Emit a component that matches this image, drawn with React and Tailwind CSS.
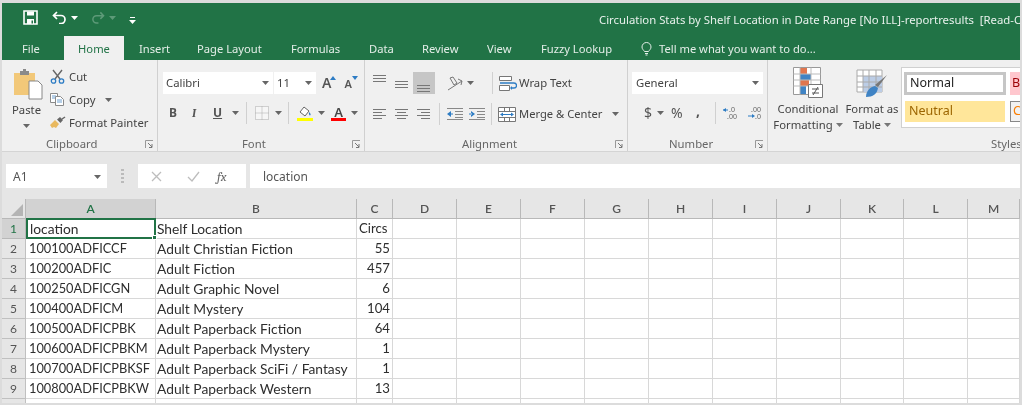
import React from 'react';

const UI_FONT = "font-['Noto_Sans','Open_Sans',sans-serif]";
const CELL_FONT = "font-['Lato','Open_Sans',sans-serif]";

const TABS = [
  { label: 'Insert', cls: 'w-[58px]' },
  { label: 'Page Layout', cls: 'w-[94px]' },
  { label: 'Formulas', cls: 'w-[78px]' },
  { label: 'Data', cls: 'w-[53px]' },
  { label: 'Review', cls: 'w-[65px]' },
  { label: 'View', cls: 'w-[54px]' },
  { label: 'Fuzzy Lookup', cls: 'w-[100px]' },
];

const COLUMNS = ['A', 'B', 'C', 'D', 'E', 'F', 'G', 'H', 'I', 'J', 'K', 'L', 'M'];

const ROWS = [
  ['location', 'Shelf Location', 'Circs'],
  ['100100ADFICCF', 'Adult Christian Fiction', '55'],
  ['100200ADFIC', 'Adult Fiction', '457'],
  ['100250ADFICGN', 'Adult Graphic Novel', '6'],
  ['100400ADFICM', 'Adult Mystery', '104'],
  ['100500ADFICPBK', 'Adult Paperback Fiction', '64'],
  ['100600ADFICPBKM', 'Adult Paperback Mystery', '1'],
  ['100700ADFICPBKSF', 'Adult Paperback SciFi / Fantasy', '1'],
  ['100800ADFICPBKW', 'Adult Paperback Western', '13'],
  ['', '', ''],
];

const Caret = ({ className = '', color = '#666' }) => (
  <svg width="7" height="4" viewBox="0 0 7 4" className={`shrink-0 ${className}`}>
    <path d="M0 0h7L3.5 4z" fill={color} />
  </svg>
);

const Launcher = ({ className = '' }) => (
  <svg width="9" height="9" viewBox="0 0 9 9" className={className}>
    <path d="M.5 8V.5H8" fill="none" stroke="#999" />
    <path d="M3 3l4 4M7 4v3.5H4" fill="none" stroke="#777" />
  </svg>
);

// text align icon, lines given as [x1, x2, y]
const Lines = ({ lines, color = '#777', w = 14, h = 12, className = '' }) => (
  <svg width={w} height={h} viewBox={`0 0 ${w} ${h}`} className={`shrink-0 ${className}`}>
    {lines.map(([a, b, y], i) => (
      <path key={i} d={`M${a} ${y + 0.5}H${b}`} stroke={color} />
    ))}
  </svg>
);

const Group = ({ width, label, labelCls, launcher, children }) => (
  <div className={`${width} h-full shrink-0 flex flex-col border-r border-[#d0d0d0] overflow-hidden`}>
    <div className="h-[76px] shrink-0">{children}</div>
    <div className="flex items-center h-[15px] relative">
      <span className={`text-[11.3px] text-[#666] leading-none whitespace-nowrap ${labelCls}`}>{label}</span>
      {launcher && <Launcher className="absolute right-[3px] top-[4px]" />}
    </div>
  </div>
);

const Sep = ({ cls }) => <div className={`w-px h-[22px] bg-[#d0d0d0] shrink-0 ${cls}`} />;

function TitleBar() {
  return (
    <div className="bg-[#217346] h-[57px] shrink-0 flex flex-col text-white overflow-hidden">
      <div className="h-[33px] flex items-center shrink-0">
        <svg width="15" height="15" viewBox="0 0 15 15" className="ml-[21px] shrink-0 -mt-[5px]">
          <path d="M1 1h13v13H1z" fill="none" stroke="#fff" strokeWidth="1.6" />
          <path d="M4 1.5h7v4H4zM4 9h7v5H4z" fill="#fff" />
          <path d="M8.5 10.5h1.5v3H8.5z" fill="#217346" />
        </svg>
        <svg width="15" height="13" viewBox="0 0 15 13" className="ml-[14px] shrink-0 -mt-[5px]">
          <path d="M5 1L1.5 4.5 5 8M2 4.5h7a4 4 0 0 1 0 8H7" fill="none" stroke="#fff" strokeWidth="1.7" />
        </svg>
        <Caret color="#fff" className="ml-[4px] -mt-[4px]" />
        <svg width="14" height="13" viewBox="0 0 15 13" className="ml-[13px] shrink-0 -mt-[5px]">
          <path d="M10 1l3.5 3.5L10 8M13 4.5H6a4 4 0 0 0 0 8h2" fill="none" stroke="#5d9a78" strokeWidth="1.6" />
        </svg>
        <Caret color="#5d9a78" className="ml-[4px] -mt-[4px]" />
        <svg width="7" height="7" viewBox="0 0 7 7" className="ml-[13px] shrink-0 mt-[1px]">
          <path d="M1 .5h5" stroke="#fff" />
          <path d="M0 3h7L3.5 7z" fill="#fff" />
        </svg>
        <span className="ml-[463px] mt-[1px] text-[11.35px] text-[#e8f1ec] whitespace-pre">
          Circulation Stats by Shelf Location in Date Range [No ILL]-reportresults  [Read-Only]
        </span>
      </div>
      <div className="h-[24px] flex items-center text-[11.2px] text-[#e4eee8] whitespace-nowrap">
        <span className="ml-[20px] w-[42px] mt-[2px] shrink-0">File</span>
        <div className="w-[60px] h-[24px] pt-[2px] bg-[#f0f0f0] text-[#217346] flex items-center justify-center shrink-0">Home</div>
        <div className="w-[15px] shrink-0" />
        {TABS.map(t => (
          <span key={t.label} className={`${t.cls} mt-[2px] shrink-0`}>{t.label}</span>
        ))}
        <svg width="11" height="14" viewBox="0 0 11 14" className="shrink-0 mt-[1px]">
          <path d="M3.5 9.5C2.5 8 1 7 1 5a4.5 4.5 0 0 1 9 0c0 2-1.500 3-2.500 4.500zM4 11.500h3M4.500 13h2" fill="none" stroke="#e4eee8" />
        </svg>
        <span className="ml-[7px] mt-[2px]">Tell me what you want to do...</span>
      </div>
    </div>
  );
}

function Clipboard() {
  return (
    <Group width="w-[156px]" label="Clipboard" labelCls="ml-[44px]" launcher>
      <div className="flex h-full">
        <div className="w-[38px] ml-[10px] flex flex-col items-start pt-[9px] shrink-0">
          <svg width="29" height="31" viewBox="0 0 29 31" className="ml-[2px]">
            <path d="M0 4h21v22H0z" fill="#f2c879" />
            <path d="M6 2h9v4H6z" fill="#8a8a8a" />
            <path d="M9 0h3v3H9z" fill="#8a8a8a" />
            <path d="M15 12h9l4 4v14H15z" fill="#fff" stroke="#888" />
          </svg>
          <span className="text-[11.3px] text-[#444] leading-none mt-[4px]">Paste</span>
          <Caret className="ml-[11px] mt-[9px]" />
        </div>
        <div className="flex flex-col pt-[5px] text-[11.3px] text-[#444] whitespace-nowrap leading-none">
          <div className="h-[23px] flex items-center">
            <svg width="15" height="15" viewBox="0 0 15 15" className="shrink-0">
              <path d="M3 1l7 9M12 1L5 10" stroke="#666" strokeWidth="1.400" />
              <circle cx="3.500" cy="12" r="2.200" fill="none" stroke="#2d7cc4" strokeWidth="1.300" />
              <circle cx="11.500" cy="12" r="2.200" fill="none" stroke="#2d7cc4" strokeWidth="1.300" />
            </svg>
            <span className="ml-[4px]">Cut</span>
          </div>
          <div className="h-[23px] flex items-center">
            <svg width="15" height="13" viewBox="0 0 15 13" className="shrink-0">
              <path d="M.5.500h7v9h-7z" fill="#fff" stroke="#8a8a8a" />
              <path d="M5.500 3.500h5l3 3v6h-8z" fill="#fff" stroke="#8a8a8a" />
              <path d="M7 7h5M7 9h5" stroke="#6c9fd0" />
              <path d="M2 3h4M2 5h3" stroke="#6c9fd0" />
            </svg>
            <span className="ml-[4px]">Copy</span>
            <Caret className="ml-[10px]" />
          </div>
          <div className="h-[23px] flex items-center">
            <svg width="16" height="13" viewBox="0 0 16 13" className="shrink-0">
              <path d="M0 9l5-5 4 4-3 4-2-1-2 1z" fill="#e9b95f" />
              <path d="M7 3.500l3-2.500 3 3-2.500 3z" fill="#666" />
              <path d="M12 3l3-2" stroke="#666" strokeWidth="1.500" />
            </svg>
            <span className="ml-[3px]">Format Painter</span>
          </div>
        </div>
      </div>
    </Group>
  );
}

function FontGroup() {
  return (
    <Group width="w-[207px]" label="Font" labelCls="ml-[84px]" launcher>
      <div className="pt-[12px]">
        <div className="flex items-center h-[22px]">
          <div className="ml-[5px] w-[110px] h-[22px] bg-white flex items-center justify-between pl-[3px] pr-[4px] text-[11.3px] text-[#444]">
            Calibri <Caret />
          </div>
          <div className="ml-px w-[42px] h-[22px] bg-white flex items-center justify-between pl-[3px] pr-[4px] text-[11.3px] text-[#444]">
            11 <Caret />
          </div>
          <div className="ml-[6px] relative text-[14px] leading-none text-[#555] font-semibold">
            A<svg width="6" height="4" viewBox="0 0 6 4" className="absolute -right-[5px] top-0"><path d="M0 4L3 0l3 4z" fill="#2d7cc4" /></svg>
          </div>
          <div className="ml-[13px] relative text-[11px] leading-none text-[#555] font-semibold">
            A<svg width="6" height="4" viewBox="0 0 6 4" className="absolute -right-[6px] -top-[2px]"><path d="M0 0h6L3 4z" fill="#2d7cc4" /></svg>
          </div>
        </div>
        <div className="flex items-center h-[22px] mt-[8px] text-[#555] text-[12px] leading-none">
          <span className="ml-[11px] w-[8px] font-bold">B</span>
          <span className="ml-[15px] w-[6px] italic font-serif font-bold">I</span>
          <span className="ml-[15px] w-[9px] underline font-bold">U</span>
          <Caret className="ml-[10px]" />
          <Sep cls="ml-[7px]" />
          <svg width="14" height="14" viewBox="0 0 14 14" className="ml-[8px] shrink-0">
            <path d="M.5.500h13v13H.5zM7 .500v13M.5 7h13" fill="#f6f6f6" stroke="#aaa" strokeDasharray="1 1" />
          </svg>
          <Caret className="ml-[6px]" />
          <Sep cls="ml-[6px]" />
          <svg width="16" height="16" viewBox="0 0 16 16" className="ml-[8px] shrink-0">
            <path d="M3 7l4-5 5 4-4 5z" fill="#fff" stroke="#666" />
            <path d="M12 7c1 1 2 2 1.500 3s-2 0-1.500-3z" fill="#2d7cc4" />
            <path d="M0 13h16v3H0z" fill="#ffff00" />
          </svg>
          <Caret className="ml-[5px]" />
          <div className="ml-[6px] w-[15px] flex flex-col items-center shrink-0">
            <span className="text-[13px] leading-[12px] font-semibold text-[#444]">A</span>
            <div className="w-[15px] h-[3px] bg-[#ff0000]" />
          </div>
          <Caret className="ml-[5px]" />
        </div>
      </div>
    </Group>
  );
}

function Alignment() {
  const long = 13;
  return (
    <Group width="w-[263px]" label="Alignment" labelCls="ml-[97px]" launcher>
      <div className="pt-[12px]">
        <div className="flex items-center h-[22px]">
          <Lines className="ml-[8px] -mt-[6px]" lines={[[0, long, 1], [0, long, 4], [0, long, 7]]} />
          <Lines className="ml-[8px] mt-[1px]" lines={[[0, long, 3], [0, long, 6], [0, long, 9]]} />
          <div className="ml-[4px] w-[22px] h-[22px] bg-[#c6c6c6] flex items-end justify-center pb-[2px] shrink-0">
            <Lines lines={[[0, long, 5], [0, long, 8], [0, long, 11]]} color="#777" />
          </div>
          <svg width="17" height="15" viewBox="0 0 17 15" className="ml-[12px] shrink-0">
            <path d="M1 14L15 5" stroke="#777" />
            <path d="M11 3l4 2-1 4" fill="none" stroke="#777" />
            <path d="M3 2l3-1 4 6-3 2z" fill="none" stroke="#777" />
          </svg>
          <Caret className="ml-[3px]" />
          <Sep cls="ml-[18px]" />
          <svg width="18" height="15" viewBox="0 0 18 15" className="ml-[6px] shrink-0">
            <path d="M.5.500h12v4H.5zM.5 9.500h10v5H.5z" fill="#fff" stroke="#777" />
            <path d="M1 7h14a2 2 0 0 1 0 5h-3" fill="none" stroke="#2d7cc4" strokeWidth="1.300" />
            <path d="M13 10l-2 2 2 2z" fill="#2d7cc4" />
          </svg>
          <span className="ml-[2px] text-[11.3px] text-[#444] whitespace-nowrap">Wrap Text</span>
        </div>
        <div className="flex items-center h-[22px] mt-[9px]">
          <Lines className="ml-[8px]" lines={[[0, 13, 1], [0, 9, 4], [0, 13, 7], [0, 9, 10]]} />
          <Lines className="ml-[8px]" lines={[[0, 13, 1], [2, 11, 4], [0, 13, 7], [2, 11, 10]]} />
          <Lines className="ml-[8px]" lines={[[0, 13, 1], [4, 13, 4], [0, 13, 7], [4, 13, 10]]} />
          <Sep cls="ml-[8px]" />
          <svg width="16" height="12" viewBox="0 0 16 12" className="ml-[7px] shrink-0">
            <path d="M0 .500h16M8 3.500h8M8 6.500h8M8 9.500h8M0 11.500h16" stroke="#888" />
            <path d="M0 6l4-3v6zM3 5.500h3v1H3z" fill="#2d7cc4" />
          </svg>
          <svg width="16" height="12" viewBox="0 0 16 12" className="ml-[6px] shrink-0">
            <path d="M0 .500h16M8 3.500h8M8 6.500h8M8 9.500h8M0 11.500h16" stroke="#888" />
            <path d="M6 6L2 3v6zM0 5.500h3v1H0z" fill="#2d7cc4" />
          </svg>
          <Sep cls="ml-[6px]" />
          <svg width="18" height="15" viewBox="0 0 18 15" className="ml-[6px] shrink-0">
            <path d="M.5.500h17v14H.5zM.5 4.500h17M.5 10.500h17M6.500.500v4M11.500.500v4M6.500 10.500v4M11.500 10.500v4" fill="#fff" stroke="#777" />
            <path d="M3 7.500h12" stroke="#2d7cc4" />
            <path d="M2 7.500l3-2v4zM16 7.500l-3-2v4z" fill="#2d7cc4" />
          </svg>
          <span className="ml-[3px] text-[11.2px] text-[#444] whitespace-nowrap">Merge &amp; Center</span>
          <Caret className="ml-[10px]" />
        </div>
      </div>
    </Group>
  );
}

function NumberGroup() {
  return (
    <Group width="w-[140px]" label="Number" labelCls="ml-[41px]" launcher>
      <div className="pt-[12px]">
        <div className="ml-[4px] w-[131px] h-[22px] bg-white flex items-center justify-between pl-[4px] pr-[4px] text-[11.3px] text-[#444]">
          General <Caret />
        </div>
        <div className="flex items-center h-[22px] mt-[8px] text-[#555] leading-none">
          <span className="ml-[16px] w-[8px] text-[14px]">$</span>
          <Caret className="ml-[5px]" />
          <span className="ml-[7px] w-[13px] text-[14px]">%</span>
          <span className="ml-[12px] w-[4px] text-[14px] font-bold -mt-[4px]">,</span>
          <Sep cls="ml-[15px]" />
          <svg width="15" height="14" viewBox="0 0 15 14" className="ml-[7px] shrink-0">
            <text x="6" y="6" fontSize="7" fill="#666">.0</text>
            <text x="4" y="13" fontSize="7" fill="#666">.00</text>
            <path d="M0 4h5" stroke="#2d7cc4" />
            <path d="M0 4l3-2v4z" fill="#2d7cc4" />
          </svg>
          <svg width="14" height="14" viewBox="0 0 14 14" className="ml-[10px] shrink-0">
            <text x="3" y="6" fontSize="7" fill="#666">.00</text>
            <text x="7" y="13" fontSize="7" fill="#666">.0</text>
            <path d="M0 10h5" stroke="#2d7cc4" />
            <path d="M7 10l-3-2v4z" fill="#2d7cc4" />
          </svg>
        </div>
      </div>
    </Group>
  );
}

function Styles() {
  return (
    <div className="w-[252px] h-full shrink-0 flex flex-col overflow-hidden">
      <div className="h-[76px] flex shrink-0">
        <div className="w-[72px] ml-[4px] flex flex-col items-center pt-[7px] text-[11.3px] leading-[16px] text-[#444] whitespace-nowrap shrink-0">
          <svg width="30" height="31" viewBox="0 0 30 31">
            <path d="M.5.500h27v27H.5z" fill="#fff" stroke="#999" />
            <path d="M7 1h7v6H7zM7 13h9v6H7z" fill="#e0764f" />
            <path d="M7 7h11v6H7z" fill="#3f83c4" />
            <path d="M7 19h6v8H7z" fill="#3f83c4" />
            <path d="M.5 7h27M.5 13h27M.5 19h27M7 .500v27M18 .500v27" stroke="#bbb" fill="none" />
            <path d="M15.500 17.500h14v13h-14z" fill="#fff" stroke="#777" />
            <path d="M19 22h7M19 26h7M25 20l-5 8" stroke="#555" />
          </svg>
          <span className="mt-[3px]">Conditional</span>
          <span className="flex items-center">Formatting<Caret className="ml-[3px]" color="#777" /></span>
        </div>
        <div className="w-[54px] ml-[1px] flex flex-col items-center pt-[7px] text-[11.3px] leading-[16px] text-[#444] whitespace-nowrap shrink-0">
          <svg width="32" height="31" viewBox="0 0 32 31">
            <path d="M1 3h25v22H1z" fill="#fff" stroke="#aaa" />
            <path d="M7 9h19v16H7z" fill="#bccde6" />
            <path d="M1 9h25M1 15h25M1 20h25M7 3v22M13 3v22M20 3v22" stroke="#aaa" fill="none" />
            <path d="M31 8l-9 12-3-2z" fill="#777" />
            <path d="M10 30c0-6 4-10 9-11l3 2c-1 6-5 9-12 9z" fill="#3f83c4" />
          </svg>
          <span className="mt-[3px]">Format as</span>
          <span className="flex items-center">Table<Caret className="ml-[3px]" color="#777" /></span>
        </div>
        <div className="ml-[2px] mt-[7px] w-[120px] h-[61px] bg-white border border-[#d0d0d0] flex flex-col pl-[2px] pt-[4px] text-[12.5px] leading-none whitespace-nowrap shrink-0 overflow-hidden">
          <div className="flex">
            <div className="w-[102px] h-[23px] border-[3px] border-[#c6c6c6] flex items-center pl-[3px] text-[#222] shrink-0">Normal</div>
            <div className="ml-[4px] w-[40px] h-[23px] bg-[#ffc7ce] flex items-center pl-[2px] text-[#9c0006] shrink-0">Bad</div>
          </div>
          <div className="flex mt-[6px]">
            <div className="ml-px w-[100px] h-[21px] bg-[#ffe69a] flex items-center pl-[4px] text-[#9c6500] shrink-0">Neutral</div>
            <div className="ml-[5px] w-[40px] h-[21px] border border-[#888] bg-[#f2f2f2] flex items-center pl-[2px] text-[#fa7d00] shrink-0">Calc</div>
          </div>
        </div>
      </div>
      <div className="flex items-center h-[15px]">
        <span className="ml-[223px] text-[11.3px] text-[#666] leading-none">Styles</span>
      </div>
    </div>
  );
}

function FormulaBar() {
  return (
    <div className="h-[47px] shrink-0 bg-[#e6e6e6] flex items-center pt-[1px] text-[12px] text-[#555]">
      <div className="ml-[4px] w-[101px] h-[24px] pt-[1px] bg-white flex items-center justify-between pl-[7px] pr-[6px] shrink-0">
        A1 <Caret />
      </div>
      <div className="ml-[14px] w-[3px] flex flex-col gap-[2px] shrink-0">
        <div className="h-[2px] bg-[#bbb]" />
        <div className="h-[2px] bg-[#bbb]" />
        <div className="h-[2px] bg-[#bbb]" />
        <div className="h-[2px] bg-[#bbb]" />
      </div>
      <div className="ml-[14px] w-[108px] h-[24px] bg-white flex items-center shrink-0">
        <svg width="11" height="11" viewBox="0 0 11 11" className="ml-[13px] shrink-0">
          <path d="M1 1l9 9M10 1l-9 9" stroke="#bdbdbd" strokeWidth="1.300" />
        </svg>
        <svg width="13" height="11" viewBox="0 0 13 11" className="ml-[25px] shrink-0">
          <path d="M1 6l4 4 7-9" fill="none" stroke="#bdbdbd" strokeWidth="1.300" />
        </svg>
        <span className="ml-[17px] italic font-serif text-[13px] text-[#666] leading-none">fx</span>
      </div>
      <div className="ml-[4px] flex-1 h-[24px] pt-[1px] bg-white flex items-center pl-[13px] text-[12px]">location</div>
    </div>
  );
}

function Sheet() {
  const head = 'h-[20px] bg-[#e6e6e6] border-r border-b border-[#b8b8b8] flex items-center justify-center text-[12px] font-semibold text-[#555]';
  const cell = 'h-[20px] pt-px bg-white border-r border-b border-[#d8d8d8] flex items-center text-[#2e2e2e] whitespace-nowrap';
  return (
    <div className={`flex-1 overflow-hidden grid grid-cols-[24px_130px_201px_36px_64px_64px_64px_64px_64px_64px_64px_63px_64px_1fr] auto-rows-[20px] ${CELL_FONT}`}>
      <div className="bg-[#e6e6e6] border-r border-b border-[#b8b8b8] flex items-end justify-end p-[2px]">
        <svg width="12" height="12" viewBox="0 0 12 12"><path d="M12 0v12H0z" fill="#b4b4b4" /></svg>
      </div>
      {COLUMNS.map(c => (
        <div key={c} className={c === 'A' ? 'h-[20px] bg-[#d2d2d2] border-r border-b border-[#b8b8b8] flex items-center justify-center text-[12px] font-semibold text-[#217346]' : head}>
          {c}
        </div>
      ))}
      {ROWS.map((r, i) => (
        <React.Fragment key={i}>
          <div className={i === 0 ? 'h-[20px] bg-[#d2d2d2] border-r border-b border-[#b8b8b8] flex items-center justify-center text-[12px] text-[#217346]' : 'h-[20px] bg-[#e6e6e6] border-r border-b border-[#c0c0c0] flex items-center justify-center text-[12px] text-[#555]'}>
            {i === 9 ? '' : i + 1}
          </div>
          {i === 0 ? (
            <div className="relative h-[21px] -mt-px pt-px bg-white border-2 border-[#217346] flex items-center pl-[2px] text-[13.8px] text-[#2e2e2e]">
              {r[0]}
              <div className="absolute -right-[3px] -bottom-[3px] w-[5px] h-[5px] bg-[#217346] border border-white" />
            </div>
          ) : (
            <div className={`${cell} pl-[3px] text-[12.8px]`}>{r[0]}</div>
          )}
          <div className={`${cell} pl-px text-[13.8px]`}>{r[1]}</div>
          <div className={`${cell} text-[13.2px] ${i === 0 ? 'pl-[2px]' : 'justify-end pr-[2px]'}`}>{r[2]}</div>
          {COLUMNS.slice(3).map(c => (
            <div key={c} className={cell} />
          ))}
        </React.Fragment>
      ))}
    </div>
  );
}

export default function App() {
  return (
    <div className={`w-[1022px] h-[405px] overflow-hidden bg-[#dcdcdc] pt-[3px] pl-[2px] pr-[2px] pb-[2px] flex flex-col blur-[0.35px] ${UI_FONT}`}>
      <TitleBar />
      <div className="h-[92px] shrink-0 bg-[#f0f0f0] flex border-b border-[#d4d4d4]">
        <Clipboard />
        <FontGroup />
        <Alignment />
        <NumberGroup />
        <Styles />
      </div>
      <FormulaBar />
      <Sheet />
    </div>
  );
}
